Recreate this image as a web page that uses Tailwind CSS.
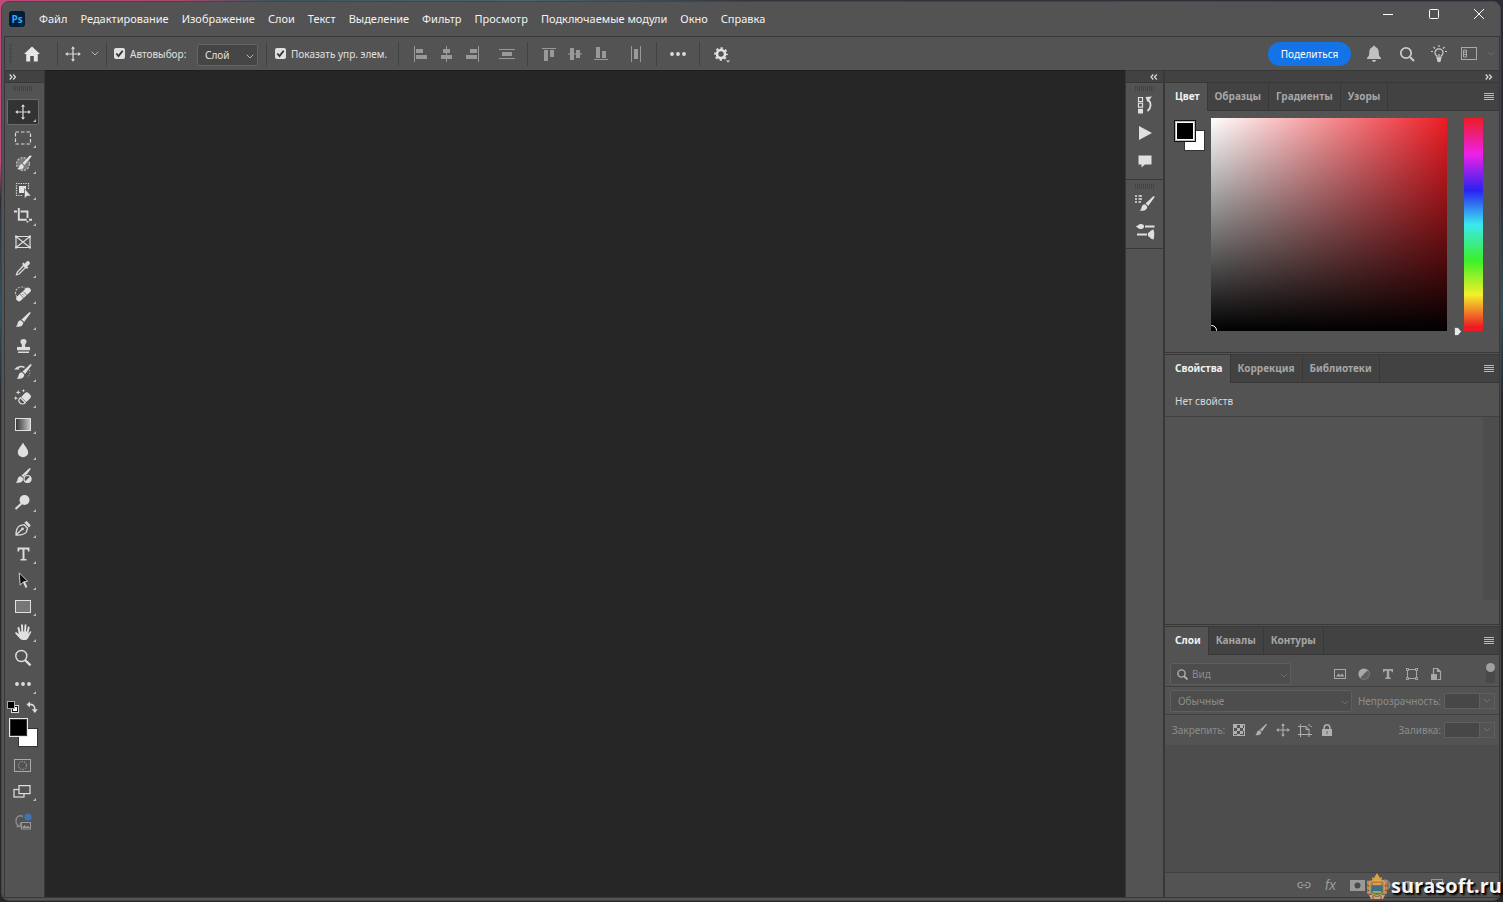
<!DOCTYPE html>
<html lang="ru">
<head>
<meta charset="utf-8">
<title>Photoshop</title>
<script src="https://cdn.jsdelivr.net/npm/@tailwindcss/browser@4"></script>
</head>
<body class="h-screen overflow-hidden bg-[linear-gradient(180deg,transparent_0%,transparent_18%,#2b2d35_22%,#30505e_34%,#26262c_45%,#26262c_100%),linear-gradient(90deg,#c04a7c_0%,#a8486f_12%,#3e5560_18%,#4a6470_35%,#33363c_50%,#2a2c36_100%)] pt-px pr-[2px] pb-px pl-px font-['Noto_Sans','Open_Sans',sans-serif] text-[10px] leading-4 text-[#e0e0e0]">
<div class="relative flex h-full flex-col rounded-lg border border-[#454545] bg-[#535353] pb-[2px] pl-[2px]">

  <header class="flex h-[34px] shrink-0 items-center pl-[5px]">
    <svg class="size-4" viewBox="0 0 16 16" aria-hidden="true"><rect width="16" height="16" rx="3" fill="#001e36"/><text x="8" y="11.500" text-anchor="middle" font-family="Open Sans, sans-serif" font-weight="700" font-size="10" fill="#31a8ff">Ps</text></svg>
    <nav class="flex gap-[13px] pl-[14px] text-[11px] text-[#f2f2f2]">
      <button>Файл</button><button>Редактирование</button><button>Изображение</button><button>Слои</button><button>Текст</button><button>Выделение</button><button>Фильтр</button><button>Просмотр</button><button>Подключаемые модули</button><button>Окно</button><button>Справка</button>
    </nav>
    <div class="ml-auto flex self-start">
      <button class="grid h-6 w-[46px] place-items-center" aria-label="Свернуть"><svg class="size-3" viewBox="0 0 12 12"><path d="M1 6.500h10" stroke="#fff"/></svg></button>
      <button class="grid h-6 w-[46px] place-items-center" aria-label="Развернуть"><svg class="size-3" viewBox="0 0 12 12"><rect x="1.500" y="1.500" width="9" height="9" rx="1" fill="none" stroke="#fff"/></svg></button>
      <button class="grid h-6 w-[43px] place-items-center" aria-label="Закрыть"><svg class="size-3" viewBox="0 0 12 12"><path d="M1 1l10 10M11 1L1 11" stroke="#fff"/></svg></button>
    </div>
  </header>

  <div class="flex min-h-0 grow flex-col border border-[#383838]">
    <div class="flex h-[33px] shrink-0 items-center">
      <svg class="ml-1 h-5 w-[3px]" viewBox="0 0 3 20"><path d="M1.500 0v20" stroke="#454545" stroke-width="3" stroke-dasharray="1 1"/></svg>
      <button class="ml-[3px] grid w-[34px] place-items-center" aria-label="Главная"><svg class="h-4 w-[18px]" viewBox="0 0 18 16"><path d="M9 0.500L17 8h-2.200v7.500h-4V10h-3.600v5.500h-4V8H1z" fill="#e6e6e6"/></svg></button>
      <div class="ml-2 flex h-6 w-[49px] items-center border-l border-[#424242] pl-[7px]">
        <svg class="size-4" viewBox="0 0 16 16"><use href="#move"/></svg>
        <svg class="ml-[10px] h-[5px] w-2" viewBox="0 0 8 5"><path d="M.7.7L4 4 7.300.7" fill="none" stroke="#b5b5b5"/></svg>
      </div>
      <div class="flex h-6 w-[91px] items-center border-l border-[#424242] pl-[7px]">
        <label class="relative flex items-center gap-[5px]"><input type="checkbox" checked class="size-[11px] appearance-none rounded-[2px] bg-[#e0e0e0]"><svg class="pointer-events-none absolute left-0 size-[11px]" viewBox="0 0 11 11"><path d="M2.300 5.500l2.200 2.500 4.200-5.300" fill="none" stroke="#333" stroke-width="1.800"/></svg><span>Автовыбор:</span></label>
      </div>
      <div class="relative mt-[2px] w-[61px]">
        <select aria-label="Автовыбор" class="block h-[22px] w-full appearance-none rounded-[2px] border border-[#656565] bg-[#454545] pl-[7px]"><option>Слой</option></select>
        <svg class="pointer-events-none absolute top-[10px] right-1 h-[5px] w-2" viewBox="0 0 8 5"><path d="M.7.7L4 4 7.300.7" fill="none" stroke="#b5b5b5"/></svg>
      </div>
      <div class="ml-2 flex h-6 w-[132px] items-center border-l border-[#424242] pl-2">
        <label class="relative flex items-center gap-[5px] whitespace-nowrap"><input type="checkbox" checked class="size-[11px] appearance-none rounded-[2px] bg-[#e0e0e0]"><svg class="pointer-events-none absolute left-0 size-[11px]" viewBox="0 0 11 11"><path d="M2.300 5.500l2.200 2.500 4.200-5.300" fill="none" stroke="#333" stroke-width="1.800"/></svg><span>Показать упр. элем.</span></label>
      </div>
      <div class="flex h-6 w-[129px] items-center gap-[10px] border-l border-[#424242] pl-[14px] text-[#999]">
        <button aria-label="По левому краю"><svg class="size-4" viewBox="0 0 16 16" fill="currentColor"><path d="M1 0h1v16H1zM3 3h7v4H3zM3 9h11v4H3z"/></svg></button>
        <button aria-label="По центру"><svg class="size-4" viewBox="0 0 16 16" fill="currentColor"><path d="M7 0h1v16H7zM4 3h7v4H4zM2 9h11v4H2z"/></svg></button>
        <button aria-label="По правому краю"><svg class="size-4" viewBox="0 0 16 16" fill="currentColor"><path d="M13 0h1v16h-1zM5 3h7v4H5zM1 9h11v4H1z"/></svg></button>
        <button class="ml-2" aria-label="Распределить по вертикали"><svg class="size-4" viewBox="0 0 16 16" fill="currentColor"><path d="M0 3h16v1H0zM3 6h10v4H3zM0 12h16v1H0z"/></svg></button>
      </div>
      <div class="flex h-6 w-[129px] items-center gap-[10px] border-l border-[#424242] pl-[14px] text-[#999]">
        <button aria-label="По верхнему краю"><svg class="size-4" viewBox="0 0 16 16" fill="currentColor"><path d="M0 2h14v1H0zM2 4h4v11H2zM8 4h4v7H8z"/></svg></button>
        <button aria-label="По середине"><svg class="size-4" viewBox="0 0 16 16" fill="currentColor"><path d="M0 7.500h14v1H0zM2 2h4v12H2zM8 4h4v8H8z"/></svg></button>
        <button aria-label="По нижнему краю"><svg class="size-4" viewBox="0 0 16 16" fill="currentColor"><path d="M0 13h14v1H0zM2 1h4v11H2zM8 5h4v7H8z"/></svg></button>
        <button class="ml-2" aria-label="Распределить по горизонтали"><svg class="size-4" viewBox="0 0 16 16" fill="currentColor"><path d="M3 0h1v16H3zM6 3h4v10H6zM12 0h1v16h-1z"/></svg></button>
      </div>
      <button class="grid h-6 w-[43px] place-items-center border-l border-[#424242]" aria-label="Ещё"><svg class="h-1 w-4" viewBox="0 0 16 4" fill="#ddd"><circle cx="2" cy="2" r="1.900"/><circle cx="8" cy="2" r="1.900"/><circle cx="14" cy="2" r="1.900"/></svg></button>
      <button class="flex h-6 items-center border-l border-[#424242] pl-[13px]" aria-label="Параметры"><svg class="h-[18px] w-[18px]" viewBox="0 0 18 18"><circle cx="8" cy="9" r="4" fill="none" stroke="#e0e0e0" stroke-width="2.600"/><circle cx="8" cy="9" r="5.800" fill="none" stroke="#e0e0e0" stroke-width="2" stroke-dasharray="2.300 2.255" stroke-dashoffset="1.150"/><path d="M13 15.500h4l-2 2z" fill="#e0e0e0"/></svg></button>
      <div class="ml-auto flex items-center">
        <button class="h-6 w-[83px] rounded-full bg-[#1473e6] text-white">Поделиться</button>
        <button class="ml-[15px]" aria-label="Уведомления"><svg class="h-[18px] w-4" viewBox="0 0 16 18" fill="#c0c0c0"><path d="M8 .8c.8 0 1.300.5 1.300 1.300 2.200.6 3.400 2.500 3.400 5 0 3.200.6 4.500 2.300 5.900v1H1v-1c1.700-1.400 2.300-2.700 2.300-5.900 0-2.500 1.200-4.400 3.400-5C6.700 1.300 7.200.8 8 .8zM6 15h4a2 2 0 0 1-4 0z"/></svg></button>
        <button class="ml-[17px]" aria-label="Поиск"><svg class="size-4" viewBox="0 0 16 16"><circle cx="7" cy="7" r="5.200" fill="none" stroke="#c8c8c8" stroke-width="1.800"/><path d="M11 11l4 4" stroke="#c8c8c8" stroke-width="2.200"/></svg></button>
        <button class="ml-4" aria-label="Обучение"><svg class="h-[18px] w-4" viewBox="0 0 16 18" fill="none" stroke="#ccc" stroke-width="1.200"><path d="M6 13v-2C4.600 10.200 4 9 4 7.800a4 4 0 0 1 8 0c0 1.200-.6 2.400-2 3.200v2z"/><path d="M8 9v4M8 0v2M2.500 2l1.500 1.500M13.500 2L12 3.500M0 6.500h2M14 6.500h2"/><path d="M6 13h4v3l-2 1.500L6 16z" fill="#ccc" stroke="none"/></svg></button>
        <button class="ml-[14px]" aria-label="Рабочая среда"><svg class="h-[13px] w-4" viewBox="0 0 16 13"><rect x=".5" y=".5" width="15" height="12" fill="none" stroke="#aaa"/><path d="M2.500 3h3v7h-3zM2.500 5h3M2.500 7.500h3" fill="none" stroke="#aaa"/></svg></button>
        <svg class="mr-1 ml-[10px] h-[5px] w-2" viewBox="0 0 8 5"><path d="M.7.7L4 4 7.300.7" fill="none" stroke="#6a6a6a"/></svg>
      </div>
    </div>

    <div class="flex min-h-0 grow">
      <aside class="flex w-[40px] shrink-0 flex-col border-t border-r border-[#383838]" aria-label="Инструменты">
        <button class="flex h-3 shrink-0 items-center border-b border-[#383838] bg-[#424242] pl-1" aria-label="Развернуть панель"><svg class="h-[6px] w-2" viewBox="0 0 8 6"><path d="M.7.500L3 3 .7 5.500M4.200.500L6.500 3 4.200 5.500" fill="none" stroke="#ddd" stroke-width="1.200"/></svg></button>
        <svg class="mt-[3px] ml-2 h-[5px] w-5 shrink-0" viewBox="0 0 20 5"><path d="M0 2.500h20" stroke="#434343" stroke-width="5" stroke-dasharray="1 1"/></svg>
        <div class="mt-2 flex flex-col pl-[2px] text-[#dcdcdc]">
          <button class="relative grid h-[26px] w-8 place-items-center rounded-[2px] border border-[#6b6b6b] bg-[#333]" aria-label="Перемещение"><svg class="size-4" viewBox="0 0 16 16"><g id="move" stroke="#dcdcdc" stroke-width="1.200" fill="#dcdcdc"><path d="M8 2v12M2 8h12" fill="none"/><path d="M8 .2l2 2.500H6zM8 15.800l2-2.500H6zM.2 8l2.500-2v4zM15.800 8l-2.500-2v4z" stroke="none"/></g></svg><svg class="absolute right-[2px] bottom-[2px] size-[3px]" viewBox="0 0 3 3"><path d="M3 0v3H0z" fill="#bbb"/></svg></button>
          <button class="relative grid h-[26px] w-8 place-items-center" aria-label="Прямоугольная область"><svg class="h-4 w-[18px]" viewBox="0 0 18 16"><rect x="1.500" y="2" width="15" height="12" fill="none" stroke="currentColor" stroke-width="1.200" stroke-dasharray="3.500 2"/></svg><svg class="absolute right-[3px] bottom-[3px] size-[3px]" viewBox="0 0 3 3"><path d="M3 0v3H0z" fill="#bbb"/></svg></button>
          <button class="relative grid h-[26px] w-8 place-items-center" aria-label="Быстрое выделение"><svg class="h-[18px] w-[18px]" viewBox="0 0 18 18"><circle cx="9" cy="9" r="6.500" fill="#7c7c7c" stroke="#bbb" stroke-width="1.300" stroke-dasharray="2 1.400"/><path d="M17.500 1.500l-7 8.500-2-1.800L15.500.8c1-.8 2.600-.2 2 .7zM7.800 9l2 1.900c0 2.800-2.200 4-6.300 3.100 1.500-.6 1.500-1.400 1.800-2.700.3-1.300 1.200-2.200 2.500-2.300z" fill="#e4e4e4"/></svg><svg class="absolute right-[3px] bottom-[3px] size-[3px]" viewBox="0 0 3 3"><path d="M3 0v3H0z" fill="#bbb"/></svg></button>
          <button class="relative grid h-[26px] w-8 place-items-center" aria-label="Выделение объектов"><svg class="h-[18px] w-[18px]" viewBox="0 0 18 18"><path d="M14.500 8V2.500h-12v12H9" fill="none" stroke="#ddd" stroke-width="1.200" stroke-dasharray="1.300 1.100"/><path d="M5 5h7v4l-2-1v4H5z" fill="#e4e4e4"/><path d="M10.500 7.500v10l2.600-2.500h4z" fill="#e4e4e4" stroke="#535353" stroke-width=".5"/></svg><svg class="absolute right-[3px] bottom-[3px] size-[3px]" viewBox="0 0 3 3"><path d="M3 0v3H0z" fill="#bbb"/></svg></button>
          <button class="relative grid h-[26px] w-8 place-items-center" aria-label="Рамка"><svg class="h-[18px] w-[18px]" viewBox="0 0 18 18"><path d="M0 4.500h3M4.800 1v11.800h8M6.500 4.500h7v6.500M13.500 15.500V14M15 12.800h3" fill="none" stroke="currentColor" stroke-width="1.900"/></svg><svg class="absolute right-[3px] bottom-[3px] size-[3px]" viewBox="0 0 3 3"><path d="M3 0v3H0z" fill="#bbb"/></svg></button>
          <button class="relative grid h-[26px] w-8 place-items-center" aria-label="Кадр"><svg class="h-[18px] w-[18px]" viewBox="0 0 18 18"><path d="M2 3.500h14v11H2zM2 3.500l14 11M16 3.500l-14 11" fill="none" stroke="currentColor" stroke-width="1.200"/><path d="M1 2.500h2v2H1zM15 2.500h2v2h-2zM1 13.500h2v2H1zM15 13.500h2v2h-2z" fill="currentColor"/></svg></button>
          <button class="relative grid h-[26px] w-8 place-items-center" aria-label="Пипетка"><svg class="h-[18px] w-[18px]" viewBox="0 0 18 18"><path d="M9.500 6.500l2 2-6.500 6.500-2.500.800.700-2.500z" fill="none" stroke="currentColor" stroke-width="1.300"/><path d="M8 5l1.400-1.400 1.300 1.200 2-2.300c1.400-1.500 4.400 1.200 2.800 2.800l-2.300 2.100 1.200 1.200L13 10z" fill="currentColor"/></svg><svg class="absolute right-[3px] bottom-[3px] size-[3px]" viewBox="0 0 3 3"><path d="M3 0v3H0z" fill="#bbb"/></svg></button>
          <button class="relative grid h-[26px] w-8 place-items-center" aria-label="Восстанавливающая кисть"><svg class="h-[18px] w-[18px]" viewBox="0 0 18 18"><path d="M3 12a5.500 5.500 0 1 1 9-8" fill="none" stroke="#bbb" stroke-width="1.200" stroke-dasharray="2 1.300"/><path d="M5 13.500l9-8.200" stroke="#e4e4e4" stroke-width="5.500" stroke-linecap="round"/><path d="M6.200 9.400l4 4.200M9.300 6.600l4 4.200" stroke="#666" stroke-width=".8"/><path d="M8.500 9.500l2 .8" stroke="#555" stroke-dasharray="1 1"/></svg><svg class="absolute right-[3px] bottom-[3px] size-[3px]" viewBox="0 0 3 3"><path d="M3 0v3H0z" fill="#bbb"/></svg></button>
          <button class="relative grid h-[26px] w-8 place-items-center" aria-label="Кисть"><svg class="h-[18px] w-[18px]" viewBox="0 0 18 18"><path id="brush" d="M16.500 2.200L10.200 11 7.500 8.600 15 1.500c1-.8 2-.2 1.500.7zM6.800 9.200l2.500 2.400c0 3.400-2.800 4.900-7.700 3.900 1.700-.7 1.600-1.700 2-3.200.5-1.900 1.600-3.100 3.200-3.100z" fill="#e0e0e0"/></svg><svg class="absolute right-[3px] bottom-[3px] size-[3px]" viewBox="0 0 3 3"><path d="M3 0v3H0z" fill="#bbb"/></svg></button>
          <button class="relative grid h-[26px] w-8 place-items-center" aria-label="Штамп"><svg class="h-[18px] w-[18px]" viewBox="0 0 18 18"><path d="M9.500 2c3.600 0 3.700 3.400 2 5-.7.700-.6 3 .3 3h4.200v3.200H3V10h4.200c.9 0 1-2.300.3-3-1.700-1.600-1.600-5 2-5zM4 14.500h11V16H4z" fill="currentColor"/></svg><svg class="absolute right-[3px] bottom-[3px] size-[3px]" viewBox="0 0 3 3"><path d="M3 0v3H0z" fill="#bbb"/></svg></button>
          <button class="relative grid h-[26px] w-8 place-items-center" aria-label="Архивная кисть"><svg class="h-[18px] w-[18px]" viewBox="0 0 18 18"><use href="#brush" x="1"/><path d="M3 5.500C5 3.500 8 3.200 10.500 4.500" fill="none" stroke="currentColor" stroke-width="1.500"/><path d="M0 6.500l3.500-3 2 3z" fill="currentColor"/><path d="M15.500 7c1 3-.3 6-2.500 7.500" fill="none" stroke="#bbb" stroke-dasharray="1.200 1.500"/></svg><svg class="absolute right-[3px] bottom-[3px] size-[3px]" viewBox="0 0 3 3"><path d="M3 0v3H0z" fill="#bbb"/></svg></button>
          <button class="relative grid h-[26px] w-8 place-items-center" aria-label="Ластик"><svg class="h-[18px] w-[18px]" viewBox="0 0 18 18"><path d="M10.500 4.500c1.500-1.600 3-1.600 4.200-.3l1.500 1.500c1.200 1.300 1 2.700-.4 4L12.300 13 7.200 8z" fill="#e0e0e0"/><path d="M6.500 8.800l4.800 4.800c-1.800 1.800-4 1.700-5.400.3-1.500-1.500-1.600-3.300.6-5.100z" fill="none" stroke="#e0e0e0" stroke-width="1.300"/><path d="M4.200.8l.6 2 2 .6-2 .6-.6 2-.6-2-2-.6 2-.6zM9.500 0l.5 1.200 1.200.5-1.200.5-.5 1.200L9 2.200l-1.200-.5L9 1.200zM1.800 7l.6 1.600 1.600.6-1.600.6-.6 1.600-.6-1.600-1.600-.6 1.600-.6z" fill="#e0e0e0"/></svg><svg class="absolute right-[3px] bottom-[3px] size-[3px]" viewBox="0 0 3 3"><path d="M3 0v3H0z" fill="#bbb"/></svg></button>
          <button class="relative grid h-[26px] w-8 place-items-center" aria-label="Градиент"><span class="h-[13px] w-4 border border-[#e0e0e0] bg-linear-to-r from-[#3a3a3a] to-[#c8c8c8]"></span><svg class="absolute right-[3px] bottom-[3px] size-[3px]" viewBox="0 0 3 3"><path d="M3 0v3H0z" fill="#bbb"/></svg></button>
          <button class="relative grid h-[26px] w-8 place-items-center" aria-label="Размытие"><svg class="h-[18px] w-[18px]" viewBox="0 0 18 18"><path d="M9 1.500c1 2.700 5.200 6.400 5.200 9.700a5.200 5 0 0 1-10.400 0c0-3.300 4.200-7 5.200-9.700z" fill="#e0e0e0"/></svg><svg class="absolute right-[3px] bottom-[3px] size-[3px]" viewBox="0 0 3 3"><path d="M3 0v3H0z" fill="#bbb"/></svg></button>
          <button class="relative grid h-[26px] w-8 place-items-center" aria-label="Корректирующая кисть"><svg class="h-[18px] w-[18px]" viewBox="0 0 18 18"><use href="#brush"/><circle cx="13.500" cy="12" r="4.600" fill="#535353"/><circle cx="13.500" cy="12" r="3.500" fill="none" stroke="#e0e0e0" stroke-width="1.200"/><path d="M11 14.500l5-5a3.500 3.500 0 0 1-5 5z" fill="#e0e0e0"/></svg></button>
          <button class="relative grid h-[26px] w-8 place-items-center" aria-label="Осветлитель"><svg class="h-[18px] w-[18px]" viewBox="0 0 18 18"><circle cx="10.500" cy="7" r="5" fill="#e0e0e0"/><path d="M7.500 10.500L1.500 16" stroke="#e0e0e0" stroke-width="2"/></svg><svg class="absolute right-[3px] bottom-[3px] size-[3px]" viewBox="0 0 3 3"><path d="M3 0v3H0z" fill="#bbb"/></svg></button>
          <button class="relative grid h-[26px] w-8 place-items-center" aria-label="Перо"><svg class="h-[18px] w-[18px]" viewBox="0 0 18 18"><path d="M2 16c0-3.800 1.200-8 4-9.500l4.200-.8 3.300 3.500-1.200 4C10.500 15.500 6 16.200 2 16zM2.500 15.500L7.700 10.500" fill="none" stroke="currentColor" stroke-width="1.300"/><circle cx="8.500" cy="9.900" r="1.400" fill="currentColor"/><path d="M10.300 3.600l2.400-1.600 4 4.300-1.700 2.200z" fill="currentColor"/></svg><svg class="absolute right-[3px] bottom-[3px] size-[3px]" viewBox="0 0 3 3"><path d="M3 0v3H0z" fill="#bbb"/></svg></button>
          <button class="relative grid h-[26px] w-8 place-items-center" aria-label="Текст"><svg class="h-[18px] w-[18px]" viewBox="0 0 18 18"><path d="M3.500 2.500h12v4H14l-.5-2h-3v9.500h2v1.500h-6V14h2V4.500h-3l-.5 2H3.500z" fill="currentColor"/></svg><svg class="absolute right-[3px] bottom-[3px] size-[3px]" viewBox="0 0 3 3"><path d="M3 0v3H0z" fill="#bbb"/></svg></button>
          <button class="relative grid h-[26px] w-8 place-items-center" aria-label="Выделение контура"><svg class="h-[18px] w-[18px]" viewBox="0 0 18 18"><path d="M9.500 10l3 6.500" stroke="#ddd" stroke-width="2"/><path d="M5.200 1.800l8.500 8.500-4 .5-3.500 3.200z" fill="#0a0a0a" stroke="#ccc"/></svg><svg class="absolute right-[3px] bottom-[3px] size-[3px]" viewBox="0 0 3 3"><path d="M3 0v3H0z" fill="#bbb"/></svg></button>
          <button class="relative grid h-[26px] w-8 place-items-center" aria-label="Прямоугольник"><span class="h-[13px] w-4 border border-[#e0e0e0] bg-[#777]"></span><svg class="absolute right-[3px] bottom-[3px] size-[3px]" viewBox="0 0 3 3"><path d="M3 0v3H0z" fill="#bbb"/></svg></button>
          <button class="relative grid h-[26px] w-8 place-items-center" aria-label="Рука"><svg class="h-[18px] w-[18px]" viewBox="0 0 18 18"><path d="M5.500 9.500L4.500 5M8.300 8.500L8 2.200M11 8.500l.500-6.200M13.500 9.500l1.200-5" stroke="#e0e0e0" stroke-width="1.900" stroke-linecap="round"/><path d="M4.800 8.500h9.400v2.600l1.600-2.300c.8-.9 1.700-.3 1.400.5L14 15.200c-.6 1.200-1.500 1.800-3 1.800H9c-1.700 0-2.500-.5-3.400-1.700L1.300 10.500c-.5-1 .6-1.600 1.500-1l2 1.500z" fill="#e0e0e0"/></svg><svg class="absolute right-[3px] bottom-[3px] size-[3px]" viewBox="0 0 3 3"><path d="M3 0v3H0z" fill="#bbb"/></svg></button>
          <button class="relative grid h-[26px] w-8 place-items-center" aria-label="Масштаб"><svg class="h-[18px] w-[18px]" viewBox="0 0 18 18"><circle cx="7.300" cy="7" r="5.500" fill="none" stroke="#e0e0e0" stroke-width="1.400"/><path d="M11 11l5.500 5.300" stroke="#e0e0e0" stroke-width="2.300"/></svg></button>
          <button class="relative grid h-[26px] w-8 place-items-center" aria-label="Ещё инструменты"><svg class="h-1 w-4" viewBox="0 0 16 4" fill="#ddd"><circle cx="2" cy="2" r="1.900"/><circle cx="8" cy="2" r="1.900"/><circle cx="14" cy="2" r="1.900"/></svg><svg class="absolute right-[3px] bottom-[3px] size-[3px]" viewBox="0 0 3 3"><path d="M3 0v3H0z" fill="#bbb"/></svg></button>
          <div class="mt-1 flex items-center justify-between pr-[6px]">
            <button aria-label="Цвета по умолчанию"><svg class="size-3" viewBox="0 0 12 12"><rect x="4.500" y="4.500" width="7" height="7" fill="#111" stroke="#ddd"/><rect x="6" y="6" width="4" height="4" fill="#fff"/><rect x=".5" y=".5" width="7" height="7" fill="#000" stroke="#aaa"/></svg></button>
            <button aria-label="Поменять цвета"><svg class="size-3" viewBox="0 0 12 12"><path d="M3 3.500c4-.5 6 1.500 5.800 5" fill="none" stroke="#ddd" stroke-width="1.600"/><path d="M.5 3.500L4 .5v6zM8.800 12L5.800 8.200h6z" fill="#ddd"/></svg></button>
          </div>
          <div class="mt-[5px] ml-[2px] grid h-[30px] w-[30px] grid-cols-[9px_10px_10px] grid-rows-[10px_9px_10px]">
            <button class="z-0 col-span-2 col-start-2 row-span-2 row-start-2 border border-[#333] bg-white" aria-label="Цвет фона"></button>
            <button class="z-10 col-span-2 col-start-1 row-span-2 row-start-1 border border-[#e8e8e8] bg-black ring-1 ring-[#333] ring-inset" aria-label="Основной цвет"></button>
          </div>
          <button class="mt-1 grid h-[26px] w-[30px] place-items-center" aria-label="Быстрая маска"><svg class="h-[13px] w-[17px]" viewBox="0 0 17 13" fill="none" stroke="#aaa"><rect x=".5" y=".5" width="16" height="12"/><circle cx="8.500" cy="6.500" r="4" stroke-dasharray="1 1.500" stroke="#ccc"/></svg></button>
          <button class="relative grid h-[26px] w-8 place-items-center" aria-label="Режим экрана"><svg class="mr-[2px] h-[13px] w-[18px]" viewBox="0 0 18 13" fill="#535353" stroke="#e0e0e0" stroke-width="1.200"><rect x="1" y="4.500" width="10" height="7.500"/><rect x="6" y=".6" width="11" height="8"/></svg><svg class="absolute right-[3px] bottom-[3px] size-[3px]" viewBox="0 0 3 3"><path d="M3 0v3H0z" fill="#bbb"/></svg></button>
          <button class="mt-[5px] grid h-[26px] w-8 place-items-center" aria-label="Облачные документы"><svg class="h-[18px] w-[18px]" viewBox="0 0 18 18"><path d="M9 3.500C5.500 1.500 2 4 2 7.500s1.500 5 3.500 6" fill="none" stroke="#8a8a8a" stroke-width="1.500"/><path d="M2.500 13.500h4v-4" fill="none" stroke="#8a8a8a" stroke-width="1.300"/><rect x="7.500" y="9.500" width="9" height="6.500" fill="#535353" stroke="#999"/><path d="M8 15l2.500-3 2 2 1.500-1.500 2 2.500z" fill="#999"/><circle cx="14" cy="4" r="3.600" fill="#3f74b0"/></svg></button>
        </div>
      </aside>

      <main class="grow border-t border-[#1e1e1e] bg-[#262626]" aria-label="Рабочая область"></main>

      <aside class="flex w-[39px] shrink-0 flex-col border-x border-t border-[#383838] text-[#dcdcdc]" aria-label="Свёрнутые панели">
        <button class="flex h-3 shrink-0 items-center justify-end border-b border-[#383838] bg-[#424242] pr-[5px]" aria-label="Развернуть панели"><svg class="h-[6px] w-2" viewBox="0 0 8 6"><path d="M3.300.5L1 3l2.300 2.500M6.800.5L4.500 3l2.300 2.500" fill="none" stroke="#ddd" stroke-width="1.200"/></svg></button>
        <div class="flex flex-col items-center border-b border-[#383838] pt-[3px] pb-1">
          <svg class="h-[5px] w-5" viewBox="0 0 20 5"><path d="M0 2.500h20" stroke="#434343" stroke-width="5" stroke-dasharray="1 1"/></svg>
          <button class="grid h-7 w-full place-items-center" aria-label="История"><svg class="h-[18px] w-4" viewBox="0 0 16 18"><path d="M1.500 1.500h4v4h-4zM1.500 7.200h4v4h-4z" fill="none" stroke="#e0e0e0" stroke-width="1.200"/><path d="M1 12.800h5v4.700H1z" fill="#e0e0e0"/><path d="M8.500 1l6.500-.500-4.500 5.500z" fill="#e0e0e0"/><path d="M11 3.500c3.500 3.500 3.500 8-.5 11.500" fill="none" stroke="#e0e0e0" stroke-width="1.800"/></svg></button>
          <button class="grid h-7 w-full place-items-center" aria-label="Операции"><svg class="size-4" viewBox="0 0 16 16"><path d="M2 1l13 7-13 7z" fill="#e0e0e0"/></svg></button>
          <button class="grid h-7 w-full place-items-center" aria-label="Комментарии"><svg class="size-4" viewBox="0 0 16 16"><path d="M1.500 2.500h13v9H8l-3.500 3v-3h-3z" fill="#e0e0e0"/></svg></button>
        </div>
        <div class="flex flex-col items-center border-b border-[#383838] pt-1 pb-[3px]">
          <svg class="h-[5px] w-5" viewBox="0 0 20 5"><path d="M0 2.500h20" stroke="#434343" stroke-width="5" stroke-dasharray="1 1"/></svg>
          <button class="grid h-7 w-full place-items-center" aria-label="Кисти"><svg class="h-[18px] w-[22px]" viewBox="0 0 22 18"><use href="#brush" x="4" y="1"/><path d="M1 2h2M4.500 2H8M1 5h2M4.500 5H8M1 8h2M4.500 8H7" stroke="#e0e0e0" stroke-width="1.400"/></svg></button>
          <button class="grid h-7 w-full place-items-center" aria-label="Настройки кисти"><svg class="h-[18px] w-[22px]" viewBox="0 0 22 18"><path d="M1 4.500c3 0 3-2.500 6-2.500 2 0 3 1 3 2.500S9 7 7 7C4 7 4 5 1 4.500z" fill="#e0e0e0"/><path d="M11 4.500h9.500M3 12.500h10" stroke="#e0e0e0" stroke-width="1.900"/><path d="M14 11c2-1 3-3.500 5.500-3.500 1 3 1 7 0 10-2.500 0-3.500-2.500-5.500-3.500z" fill="#e0e0e0"/></svg></button>
        </div>
      </aside>

      <div class="flex w-[335px] shrink-0 flex-col border-t border-l border-[#383838] text-[#a6a6a6]">
        <button class="flex h-3 shrink-0 items-center justify-end border-b border-[#383838] bg-[#424242] pr-[6px]" aria-label="Свернуть панели"><svg class="h-[6px] w-2" viewBox="0 0 8 6"><path d="M.7.5L3 3 .7 5.500M4.200.5L6.500 3 4.200 5.500" fill="none" stroke="#ddd" stroke-width="1.200"/></svg></button>

        <section class="flex h-[270px] shrink-0 flex-col border-b border-[#383838]">
          <div class="flex h-7 shrink-0 border-b border-[#383838] bg-[#424242] font-bold">
            <button class="-mb-px border-r border-[#383838] bg-[#535353] pr-[7px] pb-[3px] pl-[10px] text-[#f0f0f0]">Цвет</button>
            <button class="border-r border-[#383838] px-[7px] pb-[2px]">Образцы</button>
            <button class="border-r border-[#383838] px-[7px] pb-[2px]">Градиенты</button>
            <button class="border-r border-[#383838] px-[7px] pb-[2px]">Узоры</button>
            <button class="mr-[5px] ml-auto" aria-label="Меню панели"><svg class="h-2 w-[10px]" viewBox="0 0 10 8"><path d="M0 .5h10M0 2.500h10M0 4.500h10M0 6.500h10" stroke="#b8b8b8"/></svg></button>
          </div>
          <div class="flex grow items-start pt-[7px] pl-[10px]">
            <div class="mt-[3px] grid grid-cols-[9px_11px_10px] grid-rows-[9px_11px_10px]">
              <button class="col-span-2 col-start-2 row-span-2 row-start-2 border border-[#333] bg-white" aria-label="Цвет фона"></button>
              <button class="z-10 col-span-2 col-start-1 row-span-2 row-start-1 border border-[#bbb] bg-black ring-1 ring-[#111] outline-1 -outline-offset-2 outline-white" aria-label="Основной цвет"></button>
            </div>
            <div class="relative ml-[6px] h-[213px] grow overflow-hidden bg-[linear-gradient(to_top,#000,transparent),linear-gradient(to_right,#fff,#ed1c24)]">
              <span class="absolute -bottom-[5px] -left-[5px] size-[11px] rounded-full border border-white"></span>
            </div>
            <svg class="mb-4 ml-[7px] h-[9px] w-2 self-end" viewBox="0 0 8 9"><path d="M.5.500h3.500l3.500 4L4 8.500H.5z" fill="#e8e8e8" stroke="#333" stroke-width=".5"/></svg>
            <div class="mr-4 ml-[2px] h-[213px] w-[19px] bg-[linear-gradient(to_bottom,#ed1c24_0%,#ee20e8_17%,#2a22f0_34%,#3ae8f0_50%,#3cf028_67%,#f4f02a_83%,#ed1c24_98%)]"></div>
          </div>
        </section>

        <section class="mt-px flex h-[271px] shrink-0 flex-col border-y border-[#383838]">
          <div class="flex h-7 shrink-0 border-b border-[#383838] bg-[#424242] font-bold">
            <button class="-mb-px border-r border-[#383838] bg-[#535353] pr-[7px] pb-[3px] pl-[10px] text-[#f0f0f0]">Свойства</button>
            <button class="border-r border-[#383838] px-[7px] pb-[2px]">Коррекция</button>
            <button class="border-r border-[#383838] px-[7px] pb-[2px]">Библиотеки</button>
            <button class="mr-[5px] ml-auto" aria-label="Меню панели"><svg class="h-2 w-[10px]" viewBox="0 0 10 8"><path d="M0 .5h10M0 2.500h10M0 4.500h10M0 6.500h10" stroke="#b8b8b8"/></svg></button>
          </div>
          <p class="border-b border-[#404040] pt-[10px] pb-[7px] pl-[10px] text-[#dadada]">Нет свойств</p>
          <div class="mb-6 ml-auto w-4 grow bg-[#4d4d4d]"></div>
        </section>

        <section class="mt-px flex min-h-0 grow flex-col border-t border-[#383838]">
          <div class="flex h-7 shrink-0 border-b border-[#383838] bg-[#424242] font-bold">
            <button class="-mb-px border-r border-[#383838] bg-[#535353] pr-[7px] pb-[3px] pl-[10px] text-[#f0f0f0]">Слои</button>
            <button class="border-r border-[#383838] px-[7px] pb-[2px]">Каналы</button>
            <button class="border-r border-[#383838] px-[7px] pb-[2px]">Контуры</button>
            <button class="mr-[5px] ml-auto" aria-label="Меню панели"><svg class="h-2 w-[10px]" viewBox="0 0 10 8"><path d="M0 .5h10M0 2.500h10M0 4.500h10M0 6.500h10" stroke="#b8b8b8"/></svg></button>
          </div>
          <div class="flex h-8 shrink-0 items-center border-b border-[#404040] pt-2 pb-px pl-[5px] text-[#8c8c8c]">
            <div class="relative w-[121px]">
              <svg class="pointer-events-none absolute top-[6px] left-[7px] size-[11px]" viewBox="0 0 11 11"><circle cx="4.500" cy="4.500" r="3.600" fill="none" stroke="#b0b0b0" stroke-width="1.400"/><path d="M7 7l3.500 3.500" stroke="#b0b0b0" stroke-width="1.800"/></svg>
              <select aria-label="Фильтр слоёв" class="block h-[22px] w-full appearance-none rounded-[2px] border border-[#5f5f5f] bg-[#4d4d4d] pl-[21px]"><option>Вид</option></select>
              <svg class="pointer-events-none absolute top-[10px] right-[3px] h-[5px] w-2" viewBox="0 0 8 5"><path d="M.7.7L4 4 7.300.7" fill="none" stroke="#6c6c6c"/></svg>
            </div>
            <div class="ml-[42px] flex gap-[10px] text-[#a8a8a8]">
              <button aria-label="Пиксельные"><svg class="h-[14px] w-[14px]" viewBox="0 0 14 14"><rect x="1.500" y="2.500" width="11" height="9" fill="none" stroke="currentColor"/><path d="M3 9.500l2.500-3 2 2 1.500-2 2.500 3z" fill="currentColor"/></svg></button>
              <button aria-label="Корректирующие"><svg class="h-[14px] w-[14px]" viewBox="0 0 14 14"><circle cx="7" cy="7" r="5" fill="none" stroke="currentColor" stroke-width="1.200"/><path d="M10.700 3.300a5 5 0 0 1-7.400 7.400z" fill="#606060"/><path d="M3.300 10.700a5 5 0 0 1 7.400-7.400z" fill="currentColor"/></svg></button>
              <button aria-label="Текстовые"><svg class="h-[14px] w-[14px]" viewBox="0 0 14 14"><path d="M2 2h10v3.300h-1.200l-.5-1.500H8.200v6.700h1.500V12H4.300v-1.500h1.500V3.800H3.700l-.5 1.500H2z" fill="currentColor"/></svg></button>
              <button aria-label="Фигуры"><svg class="h-[14px] w-[14px]" viewBox="0 0 14 14" fill="none" stroke="currentColor"><path d="M3 2.500h8M3 11.500h8M2.500 3v8M11.500 3v8"/><path d="M1.500 1.500h2v2h-2zM10.500 1.500h2v2h-2zM1.500 10.500h2v2h-2zM10.500 10.500h2v2h-2z" fill="#535353"/></svg></button>
              <button aria-label="Смарт-объекты"><svg class="h-[14px] w-[14px]" viewBox="0 0 14 14"><path d="M4.500 7V1.500h4l3 3v8h-3M8.500 1.500v3h3" fill="none" stroke="currentColor" stroke-width="1.200"/><path d="M2 7h6v6H2z" fill="currentColor"/></svg></button>
            </div>
            <button class="mr-1 ml-auto flex h-5 w-[9px] items-start self-start rounded-t-full bg-[#494949]" aria-label="Переключить фильтр"><span class="size-[9px] rounded-full bg-[#a0a0a0]"></span></button>
          </div>
          <div class="flex h-7 shrink-0 items-center border-b border-[#404040] pr-1 pl-[5px] text-[#8c8c8c]">
            <div class="relative mr-[6px] min-w-0 grow">
              <select aria-label="Режим наложения" class="block h-[22px] w-full appearance-none rounded-[2px] border border-[#5f5f5f] bg-[#4d4d4d] pl-[7px]"><option>Обычные</option></select>
              <svg class="pointer-events-none absolute top-[10px] right-[3px] h-[5px] w-2" viewBox="0 0 8 5"><path d="M.7.7L4 4 7.300.7" fill="none" stroke="#6c6c6c"/></svg>
            </div>
            <label for="opacity">Непрозрачность:</label>
            <input id="opacity" type="text" class="ml-[3px] h-4 w-9 border border-[#5f5f5f] bg-[#474747] px-1">
            <button class="grid h-4 w-[15px] place-items-center border border-l-0 border-[#5f5f5f]" aria-label="Ползунок непрозрачности"><svg class="h-[5px] w-2" viewBox="0 0 8 5"><path d="M.7.7L4 4 7.300.7" fill="none" stroke="#747474"/></svg></button>
          </div>
          <div class="flex h-[30px] shrink-0 items-center pr-1 pb-px pl-[7px] text-[#8c8c8c]">
            <span>Закрепить:</span>
            <div class="ml-[7px] flex gap-2 text-[#b0b0b0]">
              <button aria-label="Прозрачные пиксели"><svg class="size-[14px]" viewBox="0 0 14 14"><rect x="1.500" y="1.500" width="11" height="11" fill="none" stroke="currentColor"/><path d="M2 2h3v3H2zM8 2h3v3H8zM5 5h3v3H5zM11 5h1v3h-1zM2 8h3v3H2zM8 8h3v3H8zM5 11h3v1H5z" fill="currentColor"/></svg></button>
              <button aria-label="Цвета пикселей"><svg class="size-[14px]" viewBox="0 0 18 18"><path d="M16.500 2.200L10.200 11 7.500 8.600 15 1.500c1-.8 2-.2 1.500.7zM6.800 9.200l2.500 2.400c0 3.400-2.800 4.900-7.700 3.900 1.700-.7 1.600-1.700 2-3.200.5-1.900 1.600-3.100 3.200-3.100z" fill="currentColor"/></svg></button>
              <button aria-label="Положение"><svg class="size-[14px]" viewBox="0 0 16 16" fill="currentColor"><path d="M8 2v12M2 8h12" stroke="currentColor" stroke-width="1.200"/><path d="M8 .2l2.200 2.800H5.800zM8 15.800l2.200-2.800H5.800zM.2 8L3 5.800v4.400zM15.800 8L13 5.800v4.400z"/></svg></button>
              <button aria-label="Монтажные области"><svg class="size-[14px]" viewBox="0 0 14 14" fill="none" stroke="currentColor"><path d="M2.500 1v1.500M0 3.500h8l3 3v5M2.500 3.500v8M8 3.500v3h3M0 11.500h14M2.500 12v2M11 12v2M11 1v2M12.500 3.500H14"/></svg></button>
              <button aria-label="Закрепить всё"><svg class="size-[14px]" viewBox="0 0 14 14"><path d="M4.200 6V4.500a2.800 2.800 0 0 1 5.600 0V6" fill="none" stroke="currentColor" stroke-width="1.500"/><path d="M2 6h10v7H2z" fill="currentColor"/><path d="M7 8v3" stroke="#666"/></svg></button>
            </div>
            <label for="fill" class="ml-auto">Заливка:</label>
            <input id="fill" type="text" class="ml-[3px] h-4 w-9 border border-[#5f5f5f] bg-[#474747] px-1">
            <button class="grid h-4 w-[15px] place-items-center border border-l-0 border-[#5f5f5f]" aria-label="Ползунок заливки"><svg class="h-[5px] w-2" viewBox="0 0 8 5"><path d="M.7.7L4 4 7.300.7" fill="none" stroke="#747474"/></svg></button>
          </div>
          <div class="grow border-b border-[#404040] bg-[#4d4d4d]"></div>
          <div class="flex h-6 shrink-0 items-center gap-[14px] pl-[132px] text-[#999]">
            <button aria-label="Связать слои"><svg class="h-2 w-[14px]" viewBox="0 0 14 8" fill="none" stroke="currentColor" stroke-width="1.200"><path d="M5.500 1.500H3.500a2.600 2.600 0 0 0 0 5.200h2M8.500 1.500h2a2.600 2.600 0 0 1 0 5.200h-2M4 4.100h6"/></svg></button>
            <button class="font-['Liberation_Sans',sans-serif] text-[14px] italic">fx</button>
            <button aria-label="Маска"><svg class="h-[11px] w-[15px]" viewBox="0 0 15 11"><rect width="15" height="11" fill="currentColor"/><circle cx="7.500" cy="5.500" r="3" fill="#4a4a4a"/></svg></button>
            <button aria-label="Новый корректирующий слой"><svg class="size-3" viewBox="0 0 12 12"><circle cx="6" cy="6" r="5" fill="#777" stroke="currentColor"/></svg></button>
            <button aria-label="Новая группа"><svg class="size-3" viewBox="0 0 12 12"><path d="M0 2h5l1 1.500h6V11H0z" fill="currentColor"/></svg></button>
            <button aria-label="Новый слой"><svg class="size-3" viewBox="0 0 12 12"><rect x=".5" y=".5" width="11" height="11" fill="none" stroke="currentColor"/></svg></button>
          </div>
        </section>
      </div>
    </div>
  </div>

  <a href="#" class="absolute -right-[2px] bottom-0 flex items-center font-['Open_Sans',sans-serif] text-[20px] leading-7 font-bold text-[#f4f4f4] [text-shadow:1px_1px_1px_#000,2px_2px_2px_#000]">
    <svg class="mr-[3px] h-7 w-[22px]" viewBox="0 0 22 28"><path d="M6 5l2 1 3-5 3 5 2-1-.5 4h-9z" fill="#d9a441"/><path d="M1 9c2-1 3 0 4 2v9c-1 3-3 3-4 1zM21 9c-2-1-3 0-4 2v9c1 3 3 3 4 1z" fill="#b98a5c"/><path d="M1 13l4 2M1 18l4 1M21 13l-4 2M21 18l-4 1" stroke="#b33" stroke-width="1.200"/><path d="M4 9h14v11c0 2-4 2-7 4-3-2-7-2-7-4z" fill="#5a7f5c" stroke="#e0b85a"/><path d="M5 10h12v3H5z" fill="#c9763f"/><path d="M6 14h10v5H6z" fill="#3e6f86"/><path d="M7 12h8M7 20h8" stroke="#e8c860"/><path d="M3 23c4-1 5 2 8 2s4-3 8-2l-2 4H5z" fill="#c9a97e"/><path d="M7 24v3M15 24v3" stroke="#a33"/></svg>surasoft.ru
  </a>
</div>
</body>
</html>
